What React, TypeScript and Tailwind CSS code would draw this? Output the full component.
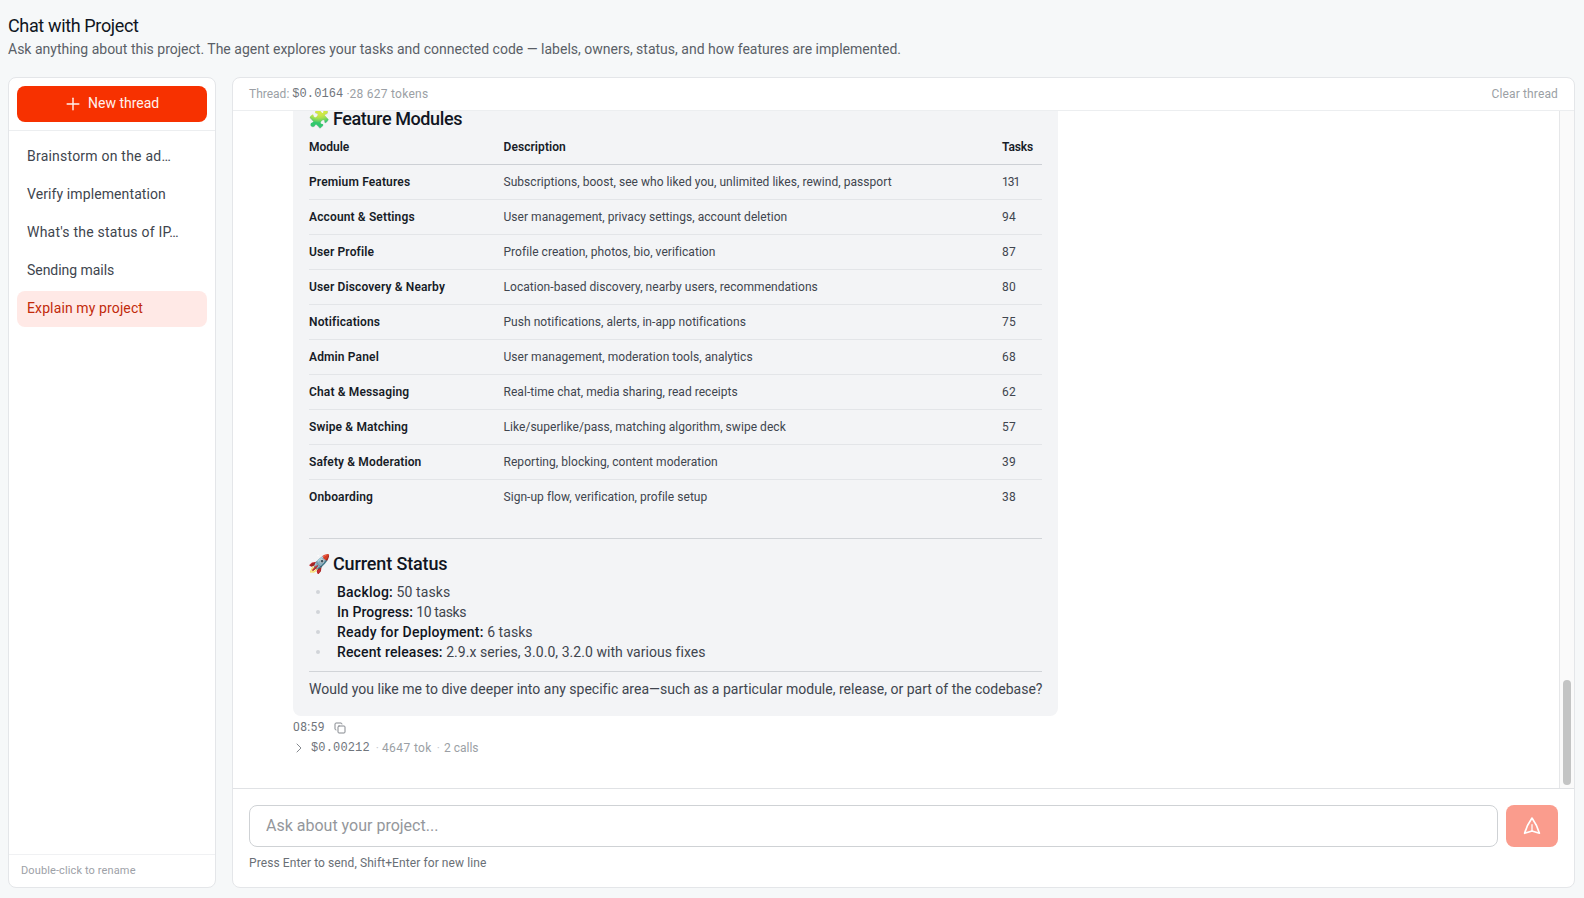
import React from "react";
import { ChevronRight, Copy, Plus } from "lucide-react";

const threads = [
  { title: "Brainstorm on the ad…", tracking: "tracking-[0.22px]" },
  { title: "Verify implementation", tracking: "tracking-[0.1px]" },
  { title: "What's the status of IP…", tracking: "tracking-[0.22px]" },
  { title: "Sending mails", tracking: "tracking-[-0.04px]" },
  { title: "Explain my project", tracking: "tracking-[0.12px]", active: true },
];

const modules: [string, string, number][] = [
  ["Premium Features", "Subscriptions, boost, see who liked you, unlimited likes, rewind, passport", 131],
  ["Account & Settings", "User management, privacy settings, account deletion", 94],
  ["User Profile", "Profile creation, photos, bio, verification", 87],
  ["User Discovery & Nearby", "Location-based discovery, nearby users, recommendations", 80],
  ["Notifications", "Push notifications, alerts, in-app notifications", 75],
  ["Admin Panel", "User management, moderation tools, analytics", 68],
  ["Chat & Messaging", "Real-time chat, media sharing, read receipts", 62],
  ["Swipe & Matching", "Like/superlike/pass, matching algorithm, swipe deck", 57],
  ["Safety & Moderation", "Reporting, blocking, content moderation", 39],
  ["Onboarding", "Sign-up flow, verification, profile setup", 38],
];

const statuses = [
  { label: "Backlog:", value: "50 tasks", labelTracking: "tracking-[0.23px]", valueTracking: "tracking-[0.1px]" },
  { label: "In Progress:", value: "10 tasks", labelTracking: "tracking-[0.07px]", valueTracking: "tracking-[-0.38px]" },
  { label: "Ready for Deployment:", value: "6 tasks", labelTracking: "tracking-[0.22px]", valueTracking: "tracking-[0.05px]" },
  { label: "Recent releases:", value: "2.9.x series, 3.0.0, 3.2.0 with various fixes", labelTracking: "tracking-[0.13px]", valueTracking: "tracking-[0.05px]" },
];

function SendIcon() {
  return (
    <svg viewBox="0 0 24 24" className="size-5 -rotate-90" fill="none" stroke="currentColor" strokeWidth="2" strokeLinecap="round" strokeLinejoin="round">
      <path d="M6 12 3.269 3.125A59.769 59.769 0 0 1 21.485 12 59.768 59.768 0 0 1 3.27 20.875L5.999 12Z" />
      <path d="M6 12h7.5" strokeWidth="1.8" opacity="0.85" />
    </svg>
  );
}

function Sidebar() {
  return (
    <aside className="flex w-[208px] flex-none flex-col overflow-hidden rounded-lg border border-[#e4e6e9] bg-white">
      <div className="border-b border-[#eceef0] p-2">
        <button className="flex h-9 w-full items-start gap-1 rounded-lg bg-[#f73100] pt-[7px] pl-[46px] text-sm leading-5 text-[#fff1ee]">
          <Plus className="mt-px size-5" strokeWidth={1.7} />
          <span className="pl-px">New thread</span>
        </button>
      </div>
      <nav className="flex flex-1 flex-col gap-0.5 p-2">
        {threads.map((t) => (
          <button
            key={t.title}
            className={`h-9 rounded-lg px-2.5 pt-[7px] pb-[9px] text-left text-sm leading-5 whitespace-nowrap ${t.tracking} ${
              t.active ? "bg-[#ffe9e6] text-[#c22a0a]" : "text-[#40454e]"
            }`}
          >
            {t.title}
          </button>
        ))}
      </nav>
      <div className="h-[33px] border-t border-[#f0f1f3] px-3 pt-2 text-[11px] leading-4 tracking-[0.12px] text-[#9da1a7]">
        Double-click to rename
      </div>
    </aside>
  );
}

function AssistantMessage() {
  return (
    <div className="w-[765px] rounded-lg bg-[#f3f4f6] px-4 pt-3 pb-[17px] text-sm leading-5 text-[#40454e]">
      <h2 className="-ml-px flex h-7 gap-[3px] text-lg leading-7 font-medium whitespace-nowrap text-[#101522]">
        <span className="opacity-80 brightness-110">🧩</span>
        <span className="tracking-[-0.4px]">Feature Modules</span>
      </h2>
      <div className="mt-1.5 text-xs leading-4">
        <div className="grid grid-cols-[194px_499px_1fr] border-b border-[#cdd0d5] pb-[9px] font-semibold text-[#171c27]">
          <span>Module</span>
          <span className="pl-[0.5px] tracking-[0.07px]">Description</span>
          <span className="tracking-[-0.15px]">Tasks</span>
        </div>
        {modules.map(([name, description, count]) => (
          <div
            key={name}
            className="grid h-[35px] grid-cols-[194px_499px_1fr] border-b border-[#e3e5e8] pt-[9px] tracking-[0.045px] last:border-b-0"
          >
            <strong className="font-semibold tracking-[0.14px] text-[#171c27]">{name}</strong>
            <span className="pl-[0.5px]">{description}</span>
            <span className={count > 99 ? "tracking-[-1px]" : "tracking-[0.2px]"}>{count}</span>
          </div>
        ))}
      </div>
      <hr className="mt-[23px] border-[#d1d4d8]" />
      <h2 className="mt-[11px] -ml-px flex h-7 gap-[3px] text-lg leading-7 font-medium whitespace-nowrap text-[#101522]">
        <span>🚀</span>
        <span className="tracking-[-0.13px]">Current Status</span>
      </h2>
      <ul className="mt-1">
        {statuses.map((s) => (
          <li key={s.label} className="flex h-5 items-center">
            <span className="mr-[17px] ml-[7px] size-1 rounded-full bg-[#d1d4d9]" />
            <span className={s.valueTracking}>
              <strong className={`font-medium text-[#101522] ${s.labelTracking}`}>{s.label}</strong> {s.value}
            </span>
          </li>
        ))}
      </ul>
      <hr className="mt-[9px] border-[#d1d4d8]" />
      <p className="mt-[7px] tracking-[0.013px] whitespace-nowrap">
        Would you like me to dive deeper into any specific area—such as a particular module, release, or part of the codebase?
      </p>
    </div>
  );
}

function ChatPanel() {
  return (
    <main className="flex w-[1343px] flex-none flex-col overflow-hidden rounded-lg border border-[#e4e6e9] bg-white">
      <div className="flex h-[33px] flex-none items-start justify-between border-b border-[#eceef0] px-4 pt-2 text-xs leading-4 text-[#9b9fa5]">
        <div className="flex whitespace-pre">
          <span>Thread: </span>
          <span className="font-[Liberation_Mono,monospace] tracking-[0.1px] text-[#70757c]">$0.0164</span>
          <span className="ml-[3px]">·</span>
          <span className="tracking-[0.26px]">28 627 tokens</span>
        </div>
        <button className="leading-4 tracking-[0.14px]">Clear thread</button>
      </div>

      <div className="flex min-h-0 flex-1">
        <div className="flex min-w-0 flex-1 flex-col items-start justify-end overflow-hidden pb-8 pl-[60px]">
          <AssistantMessage />
          <div className="mt-[3px] flex h-4 items-center text-xs leading-4 text-[#70757c]">
            <span className="tracking-[0.4px]">08:59</span>
            <Copy className="mt-px ml-[9px] size-3 text-[#85898f]" strokeWidth={2} />
          </div>
          <div className="mt-[5px] flex h-4 items-center text-xs leading-4 text-[#9b9fa5]">
            <ChevronRight className="-ml-0.5 size-4 text-[#85898f]" strokeWidth={1.5} />
            <span className="ml-1 font-[Liberation_Mono,monospace] tracking-[0.15px] text-[#70757c]">$0.00212</span>
            <span className="ml-[6px] text-[#c8cbcf]">·</span>
            <span className="ml-[3px] tracking-[0.4px]">4647 tok</span>
            <span className="ml-[5px] text-[#c8cbcf]">·</span>
            <span className="ml-1">2 calls</span>
          </div>
        </div>
        <div className="flex w-[15px] flex-none flex-col justify-end border-l border-[#e6e7e9] bg-[#fafafa] pb-[3px] pl-[3px]">
          <div className="h-[105px] w-2 rounded-full bg-[#c3c4c4]" />
        </div>
      </div>

      <div className="h-[99px] flex-none border-t border-[#e0e2e5] px-4 pt-4">
        <div className="flex gap-2">
          <input
            className="h-[42px] flex-1 rounded-lg border border-[#cfd2d5] bg-white px-4 pb-px text-base leading-6 placeholder:text-[#94979c] focus:outline-none"
            placeholder="Ask about your project..."
          />
          <button className="flex h-[42px] w-[52px] items-center justify-center rounded-lg bg-[#fa9c8d] text-white">
            <SendIcon />
          </button>
        </div>
        <p className="mt-2 text-xs leading-4 tracking-[0.095px] text-[#6a6f76]">
          Press Enter to send, Shift+Enter for new line
        </p>
      </div>
    </main>
  );
}

export default function App() {
  return (
    <div className="flex h-screen flex-col overflow-hidden bg-[#f6f8f9] px-2 pt-3 font-[Roboto,sans-serif]">
      <header className="h-[65px] flex-none">
        <h1 className="text-lg leading-7 tracking-[-0.36px] text-[#101522]">Chat with Project</h1>
        <p className="-mt-px text-sm leading-5 text-[#5a5f67]">
          Ask anything about this project. The agent explores your tasks and connected code — labels, owners, status, and how features are implemented.
        </p>
      </header>
      <div className="flex h-[811px] flex-none gap-4">
        <Sidebar />
        <ChatPanel />
      </div>
    </div>
  );
}
